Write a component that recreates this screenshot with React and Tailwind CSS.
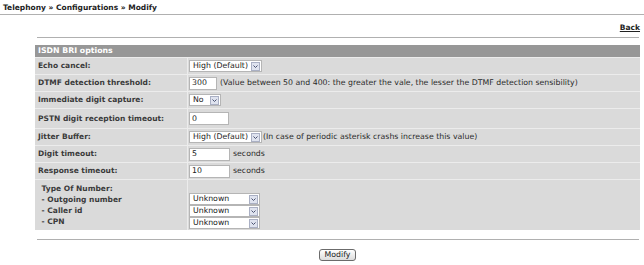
const font = { fontFamily: '"DejaVu Sans", Verdana, sans-serif' }

function Select({ value, width }) {
  return (
    <span
      className={`inline-flex h-[12px] items-center justify-between border border-[#b5b5b5] bg-white pl-[3px] pr-[1px] text-[7.8px] leading-none text-[#222] ${width}`}
    >
      <span>{value}</span>
      <span className="flex h-[9px] w-[9px] items-center justify-center border border-[#aab0c4] bg-[#dfe3ef]">
        <svg width="5" height="3" viewBox="0 0 5 3">
          <path d="M0.5 0.5 L2.5 2.5 L4.5 0.5" fill="none" stroke="#4a5270" strokeWidth="1" />
        </svg>
      </span>
    </span>
  )
}

function TextInput({ value, width }) {
  return (
    <span
      className={`inline-flex h-[13px] items-center border border-[#b5b5b5] bg-white pl-[2px] text-[7.8px] leading-none text-[#222] ${width}`}
    >
      {value}
    </span>
  )
}

function Row({ label, children, height = 'h-[16px]' }) {
  return (
    <div className={`grid grid-cols-[152px_1fr] gap-px ${height}`}>
      <div className="flex items-center bg-[#dadada] pl-[3px] text-[7.5px] font-bold text-[#3a3a3a]">
        {label}
      </div>
      <div className="flex items-center gap-[3px] bg-[#dadada] pl-[1px] text-[7.8px] text-[#2a2a2a]">
        {children}
      </div>
    </div>
  )
}

export default function App() {
  return (
    <div className="h-[265px] w-[644px] overflow-hidden bg-white" style={font}>
      <div className="pl-[3px] pt-[3px] text-[7.5px] font-bold leading-[9px] text-[#222]">
        Telephony » Configurations » Modify
      </div>
      <div className="mt-[2px] h-px bg-[#b0b0b0]" />

      <div className="flex justify-end pr-[4px] pt-[8px]">
        <a className="text-[7.5px] font-bold leading-[9px] text-[#222] underline">Back</a>
      </div>
      <div className="ml-[37px] mr-[5px] mt-[5px] h-px bg-[#b0b0b0]" />

      <div className="ml-[35px] mr-[4px] mt-[7px] flex flex-col gap-px bg-[#ececec]">
        <div className="flex h-[12px] items-center bg-[#979797] pl-[3px] text-[7.8px] font-bold text-white">
          ISDN BRI options
        </div>
        <Row label="Echo cancel:">
          <Select value="High (Default)" width="w-[73px]" />
        </Row>
        <Row label="DTMF detection threshold:">
          <TextInput value="300" width="w-[28px]" />
          <span>
            (Value between 50 and 400: the greater the vale, the lesser the DTMF detection sensibility)
          </span>
        </Row>
        <Row label="Immediate digit capture:">
          <Select value="No" width="w-[32px]" />
        </Row>
        <Row label="PSTN digit reception timeout:" height="h-[19px]">
          <TextInput value="0" width="w-[40px]" />
        </Row>
        <Row label="Jitter Buffer:">
          <Select value="High (Default)" width="w-[73px]" />
          <span className="-ml-[2px]">(In case of periodic asterisk crashs increase this value)</span>
        </Row>
        <Row label="Digit timeout:">
          <TextInput value="5" width="w-[41px]" />
          <span>seconds</span>
        </Row>
        <Row label="Response timeout:">
          <TextInput value="10" width="w-[41px]" />
          <span>seconds</span>
        </Row>
        <div className="grid h-[50px] grid-cols-[152px_1fr] gap-px">
          <div className="flex flex-col bg-[#dadada] pl-[4px] pt-[3px] text-[7.5px] font-bold leading-[11px] text-[#3a3a3a]">
            <span>&nbsp;Type Of Number:</span>
            <span>&nbsp;- Outgoing number</span>
            <span>&nbsp;- Caller id</span>
            <span>&nbsp;- CPN</span>
          </div>
          <div className="flex flex-col bg-[#dadada] pl-[1px] pt-[13px]">
            <Select value="Unknown" width="w-[71px]" />
            <Select value="Unknown" width="w-[71px]" />
            <Select value="Unknown" width="w-[71px]" />
          </div>
        </div>
      </div>

      <div className="ml-[37px] mr-[5px] mt-[9px] h-px bg-[#b0b0b0]" />

      <div className="ml-[35px] mr-[4px] flex justify-center pt-[9px]">
        <button className="h-[12px] w-[37px] rounded-[3px] border border-[#6b6b6b] bg-gradient-to-b from-white to-[#dcdcdc] text-[7.8px] leading-none text-[#222]">
          Modify
        </button>
      </div>
    </div>
  )
}
